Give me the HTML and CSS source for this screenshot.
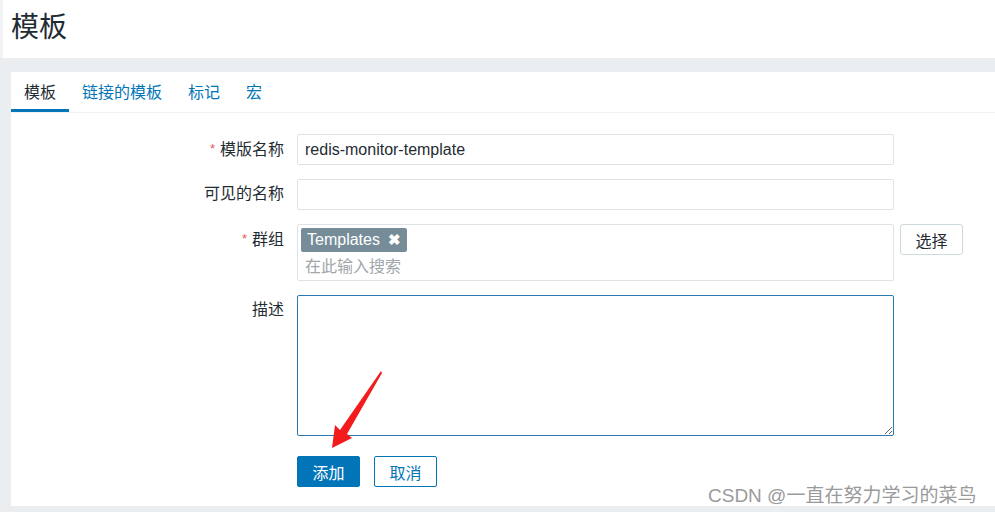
FILE: index.html
```html
<!DOCTYPE html>
<html lang="zh">
<head>
<meta charset="utf-8">
<title>模板</title>
<link rel="stylesheet" href="styles.css">
</head>
<body>
<header class="page-header">
  <h1 class="page-title">模板</h1>
</header>
<main class="wrap">
  <section class="panel">
    <nav class="tabs">
      <span class="tab active">模板</span>
      <a class="tab">链接的模板</a>
      <a class="tab">标记</a>
      <a class="tab">宏</a>
    </nav>
    <form class="form">
      <label class="label"><span class="req">*</span>模版名称</label>
      <input class="input" type="text" value="redis-monitor-template">
      <span></span>

      <label class="label">可见的名称</label>
      <input class="input" type="text" value="">
      <span></span>

      <label class="label"><span class="req">*</span>群组</label>
      <div class="multi">
        <span class="tag">Templates <span class="tag-x">✖</span></span>
        <span class="placeholder">在此输入搜索</span>
      </div>
      <div class="select-cell"><button type="button" class="btn-alt">选择</button></div>

      <label class="label">描述</label>
      <textarea class="textarea"></textarea>
      <span></span>

      <span></span>
      <div class="actions">
        <button type="button" class="btn-primary">添加</button>
        <button type="button" class="btn-outline">取消</button>
      </div>
      <span></span>
    </form>
  </section>
</main>
<svg class="arrow" width="995" height="512" viewBox="0 0 995 512">
  <polygon points="381,371 382,373 347,434 352,438 332,448 335,425 340,430" fill="#f21c1c"/>
</svg>
<div class="watermark">CSDN @一直在努力学习的菜鸟</div>
</body>
</html>
```
FILE: styles.css
```css
* { box-sizing: border-box; }
html, body { margin: 0; padding: 0; }
body {
  width: 995px;
  height: 512px;
  overflow: hidden;
  background: #ebeef0;
  font-family: "Liberation Sans", Arial, "Noto Sans CJK SC", sans-serif;
  color: #1f2c33;
  font-size: 16px;
  position: relative;
}
.page-header {
  height: 58px;
  background: #fff;
  padding-left: 11px;
  border-left: 3px solid #f1f3f5;
  display: flex;
  align-items: center;
}
.page-title {
  margin: 0;
  font-size: 28px;
  font-weight: normal;
  line-height: 1;
  margin-top: -3px;
  margin-left: -3px;
  color: #1f2c33;
}
.wrap {
  padding: 14px 0 0 11px;
  height: 454px;
}
.panel {
  background: #fff;
  height: 434px;
}
.tabs {
  display: flex;
  height: 41px;
  border-bottom: 1px solid #f0f2f3;
}
.tab {
  padding: 3px 13px 0;
  line-height: 35px;
  color: #0275b8;
  border-bottom: 3px solid transparent;
  cursor: pointer;
}
.tab.active {
  color: #1f2c33;
  border-bottom-color: #0275b8;
}
.form {
  display: grid;
  grid-template-columns: 273px 597px 68px;
  column-gap: 13px;
  row-gap: 14px;
  padding-top: 21px;
}
.label {
  text-align: right;
  line-height: 30px;
  color: #1f2c33;
  white-space: nowrap;
}
.req {
  color: #e45959;
  font-size: 13px;
  margin-right: 5px;
  vertical-align: 2px;
}
.input {
  height: 31px;
  border: 1px solid #dde3e6;
  border-radius: 2px;
  padding: 0 7px;
  font: inherit;
  color: #1f2c33;
  width: 597px;
}
.multi {
  height: 57px;
  border: 1px solid #dde3e6;
  border-radius: 2px;
  padding: 3px 3px 0 3px;
  display: flex;
  flex-direction: column;
  align-items: flex-start;
}
.tag {
  background: #768d99;
  color: #fff;
  border-radius: 2px;
  height: 24px;
  line-height: 24px;
  padding: 0 6px;
  display: inline-flex;
  align-items: center;
}
.tag-x {
  font-size: 15px;
  margin-left: 8px;
  font-weight: bold;
}
.placeholder {
  color: #a0a6aa;
  margin-top: 3px;
  padding-left: 4px;
  line-height: 24px;
}
.select-cell { margin-left: -7px; }
.btn-alt {
  height: 31px;
  width: 63px;
  border: 1px solid #cfd8dc;
  border-radius: 3px;
  background: #fff;
  font: inherit;
  color: #1f2c33;
}
.textarea {
  height: 141px;
  width: 597px;
  border: 1px solid #2a78b0;
  border-radius: 2px;
  font: inherit;
  padding: 5px 7px;
  resize: both;
  display: block;
}
.actions {
  display: flex;
  gap: 14px;
  padding-top: 6px;
}
.btn-primary {
  height: 31px;
  width: 63px;
  background: #0275b8;
  border: 1px solid #0275b8;
  border-radius: 2px;
  color: #fff;
  font: inherit;
}
.btn-outline {
  height: 31px;
  width: 63px;
  background: #fff;
  border: 1px solid #0275b8;
  border-radius: 2px;
  color: #0275b8;
  font: inherit;
}
.arrow {
  position: absolute;
  left: 0;
  top: 0;
  pointer-events: none;
}
.watermark {
  position: absolute;
  left: 708px;
  top: 480px;
  font-size: 19px;
  color: #9a9a9a;
  font-family: "Liberation Sans", "Noto Sans CJK SC", sans-serif;
  white-space: nowrap;
}
```
